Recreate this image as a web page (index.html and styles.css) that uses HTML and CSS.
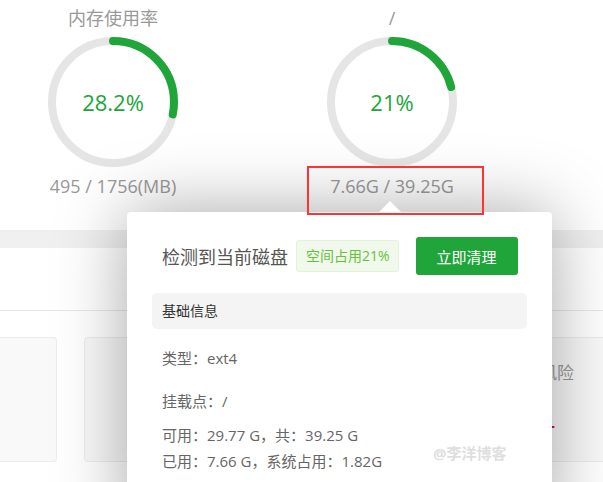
FILE: index.html
```html
<!DOCTYPE html>
<html lang="zh-CN">
<head>
    <meta charset="UTF-8">
    <meta name="viewport" content="width=device-width, initial-scale=1.0">
    <title>磁盘信息</title>
    <link rel="stylesheet" href="styles.css">
</head>
<body>

    <div class="page">
        <!-- Gauges -->
        <div class="gauges">
            <div class="gauge">
                <div class="gauge-title">内存使用率</div>
                <div class="ring">
                    <svg width="130" height="130" viewBox="0 0 130 130">
                        <circle class="ring-bg" cx="65" cy="65" r="61"></circle>
                        <circle class="ring-val" cx="65" cy="65" r="61" stroke-dasharray="108.1 383.3" transform="rotate(-90 65 65)"></circle>
                    </svg>
                    <span class="ring-text">28.2%</span>
                </div>
                <div class="gauge-info">495 / 1756(MB)</div>
            </div>
            <div class="gauge">
                <div class="gauge-title">/</div>
                <div class="ring">
                    <svg width="130" height="130" viewBox="0 0 130 130">
                        <circle class="ring-bg" cx="65" cy="65" r="61"></circle>
                        <circle class="ring-val" cx="65" cy="65" r="61" stroke-dasharray="80.5 383.3" transform="rotate(-90 65 65)"></circle>
                    </svg>
                    <span class="ring-text">21%</span>
                </div>
                <div class="gauge-info"><span class="marked">7.66G / 39.25G</span></div>
            </div>
        </div>

        <div class="band"></div>

        <div class="panel">
            <div class="tabs"></div>
            <div class="cards">
                <div class="card card-cut"></div>
                <div class="card card-wide">
                    <div class="card-title">系统负载</div>
                </div>
                <div class="card card-risk">
                    <div class="card-title">安全风险</div>
                    <div class="card-num">4</div>
                </div>
            </div>
        </div>

        <!-- Disk popover -->
        <div class="popover">
            <div class="pop-head">
                <span class="pop-title">检测到当前磁盘</span>
                <span class="tag">空间占用21%</span>
                <button class="btn">立即清理</button>
            </div>
            <div class="pop-section">基础信息</div>
            <div class="pop-line first">类型：ext4</div>
            <div class="pop-line second">挂载点：/</div>
            <div class="pop-line third">可用：29.77 G，共：39.25 G</div>
            <div class="pop-line">已用：7.66 G，系统占用：1.82G</div>
        </div>

        <div class="watermark">@李洋博客</div>
    </div>

</body>
</html>
```

FILE: styles.css
```css
body {
    margin: 0;
    font-family: "Open Sans", "Noto Sans CJK SC", sans-serif;
    background: #fff;
    overflow: hidden;
}
.page {
    position: relative;
    width: 603px;
    height: 482px;
    overflow: hidden;
}
.gauges {
    display: flex;
    height: 230px;
    padding-left: 23px;
    gap: 99px;
}
.gauge {
    width: 180px;
    flex-shrink: 0;
    display: flex;
    flex-direction: column;
    align-items: center;
}
.gauge-title {
    font-size: 18px;
    color: #999;
    line-height: 22px;
    margin-top: 7px;
}
.ring {
    position: relative;
    width: 130px;
    height: 130px;
    margin-top: 8px;
}
.ring svg {
    display: block;
}
.ring-bg {
    fill: none;
    stroke: #e5e5e5;
    stroke-width: 8;
}
.ring-val {
    fill: none;
    stroke: #20a53a;
    stroke-width: 8;
    stroke-linecap: round;
}
.ring-text {
    position: absolute;
    left: 0;
    right: 0;
    top: 50%;
    transform: translateY(-50%);
    text-align: center;
    font-size: 22px;
    color: #20a53a;
}
.gauge-info {
    font-size: 18px;
    color: #999;
    margin-top: 7px;
}
.marked {
    position: relative;
}
.marked::after {
    content: "";
    position: absolute;
    left: -23px;
    right: -30px;
    top: -8px;
    bottom: -17px;
    border: 2px solid #f33;
    z-index: 5;
}
.band {
    height: 18px;
    background: #f0f0f0;
}
.panel {
    background: #fff;
}
.tabs {
    height: 62px;
    border-bottom: 1px solid #e8e8e8;
}
.cards {
    display: flex;
    gap: 27px;
    padding-top: 26px;
}
.card {
    flex-shrink: 0;
    height: 125px;
    background: #f9f9f9;
    border: 1px solid #ececec;
    border-radius: 4px;
    box-sizing: border-box;
    text-align: center;
}
.card-cut {
    width: 57px;
    border-left: none;
    border-radius: 0 4px 4px 0;
}
.card-wide {
    width: 329px;
}
.card-risk {
    width: 200px;
}
.card-title {
    font-size: 17px;
    color: #999;
    margin-top: 21px;
}
.card-num {
    font-size: 26px;
    color: #ef0808;
    margin-top: 20px;
    padding-left: 15px;
}
.popover {
    position: absolute;
    left: 127px;
    top: 212px;
    width: 425px;
    height: 320px;
    box-sizing: border-box;
    padding: 25px 25px;
    background: #fff;
    border-radius: 4px;
    box-shadow: 0 0 70px rgba(0, 0, 0, 0.35);
    z-index: 3;
}
.popover::before {
    content: "";
    position: absolute;
    left: 252px;
    top: -11px;
    border-left: 11px solid transparent;
    border-right: 11px solid transparent;
    border-bottom: 11px solid #fff;
}
.pop-head {
    display: flex;
    align-items: center;
    padding-left: 10px;
    height: 38px;
}
.pop-title {
    font-size: 18px;
    color: #555;
}
.tag {
    margin-left: 8px;
    height: 32px;
    line-height: 30px;
    box-sizing: border-box;
    padding: 0 8px 0 9px;
    font-size: 14px;
    color: #67c23a;
    background: #f0f9eb;
    border: 1px solid #e1f3d8;
    border-radius: 3px;
}
.btn {
    margin-left: 17px;
    width: 102px;
    height: 38px;
    border: none;
    border-radius: 3px;
    background: #20a53a;
    color: #fff;
    font-family: inherit;
    font-size: 15px;
}
.pop-section {
    margin-top: 18px;
    height: 36px;
    line-height: 36px;
    padding-left: 10px;
    background: #f4f4f4;
    border-radius: 5px;
    font-size: 14px;
    color: #333;
}
.pop-line {
    padding-left: 10px;
    font-size: 15px;
    color: #666;
    line-height: 26px;
}
.pop-line.first {
    margin-top: 16px;
}
.pop-line.second {
    margin-top: 17px;
}
.pop-line.third {
    margin-top: 8px;
}
.watermark {
    position: absolute;
    left: 433px;
    top: 442px;
    font-size: 15px;
    font-weight: bold;
    color: rgba(200, 200, 200, 0.6);
    z-index: 6;
}
```
